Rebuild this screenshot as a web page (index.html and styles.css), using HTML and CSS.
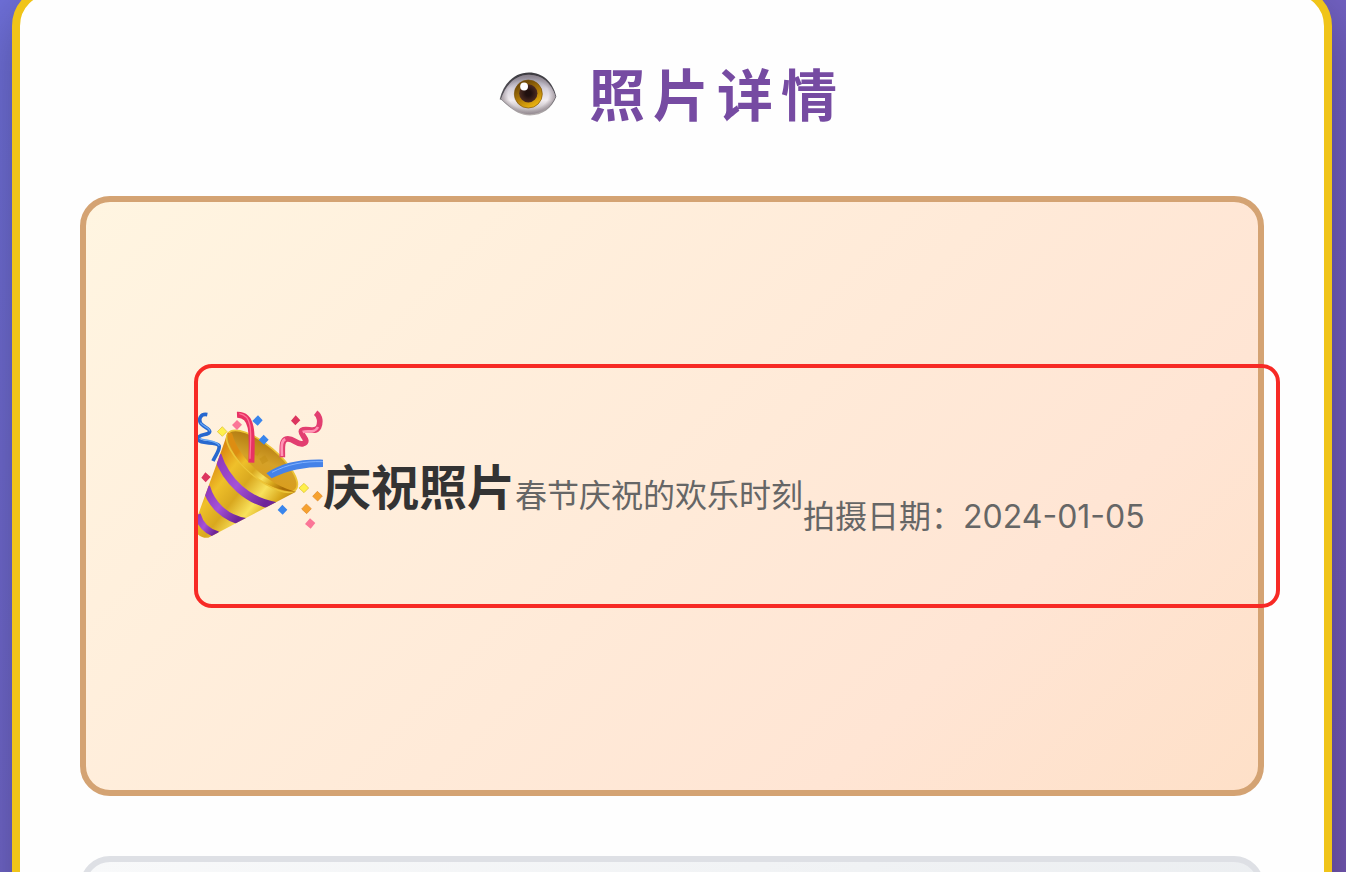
FILE: index.html
```
<!DOCTYPE html>
<html lang="zh-CN">
<head>
  <meta charset="UTF-8">
  <meta name="viewport" content="width=device-width, initial-scale=1.0">
  <title>照片详情</title>
  <link rel="stylesheet" href="styles.css">
</head>
<body>
  <main class="detail-card">
    <h1 class="detail-title">
      <svg class="eye-icon" viewBox="28 48 178 138" aria-hidden="true">
        <defs>
          <linearGradient id="lid" x1="0" y1="0" x2="0" y2="1">
            <stop offset="0" stop-color="#3c3b40"/>
            <stop offset="0.5" stop-color="#55525a"/>
            <stop offset="1" stop-color="#b9b3b3"/>
          </linearGradient>
          <linearGradient id="white" x1="0" y1="0" x2="0" y2="1">
            <stop offset="0" stop-color="#85818f"/>
            <stop offset="0.35" stop-color="#d5d0da"/>
            <stop offset="0.65" stop-color="#f1ecef"/>
            <stop offset="1" stop-color="#aaa4a8"/>
          </linearGradient>
          <linearGradient id="iris" x1="0.2" y1="0" x2="0.7" y2="1">
            <stop offset="0" stop-color="#5c3c06"/>
            <stop offset="0.5" stop-color="#a87408"/>
            <stop offset="1" stop-color="#f2bb10"/>
          </linearGradient>
          <radialGradient id="pupil">
            <stop offset="0.3" stop-color="#20100f"/>
            <stop offset="1" stop-color="#4d2c22"/>
          </radialGradient>
          <radialGradient id="corner" cx="0.5" cy="0.5" r="0.5">
            <stop offset="0.75" stop-color="#8c8088" stop-opacity="0"/>
            <stop offset="1" stop-color="#8c8088" stop-opacity=".7"/>
          </radialGradient>
        </defs>
        <path fill="url(#lid)" d="M30 133C42 84 76 51 120 51c42 0 74 29 84 74-14 37-43 58-81 58-35 0-62-24-86-47z"/>
        <path fill="url(#white)" d="M35 132C48 89 78 59 120 58c39 0 70 25 81 67-14 33-42 54-79 54-34 0-58-20-81-42z"/>
        <path fill="url(#corner)" d="M35 132C48 89 78 59 120 58c39 0 70 25 81 67-14 33-42 54-79 54-34 0-58-20-81-42z"/>
        <circle cx="118" cy="117" r="43" fill="url(#iris)" stroke="#7c5206" stroke-width="2"/>
        <circle cx="118" cy="115" r="28" fill="url(#pupil)"/>
        <circle cx="105" cy="94" r="12" fill="#fff"/>
      </svg>
      <span>照片详情</span>
    </h1>

    <section class="photo-frame">
      <div class="photo-content">
        <svg class="party-icon" viewBox="24 25 375 390" aria-hidden="true">
          <defs>
            <linearGradient id="gold" x1="0.1" y1="0.4" x2="0.8" y2="0.95">
              <stop offset="0" stop-color="#dd8d12"/>
              <stop offset="0.2" stop-color="#efc02a"/>
              <stop offset="0.42" stop-color="#d9a81f"/>
              <stop offset="0.62" stop-color="#f9e25c"/>
              <stop offset="0.8" stop-color="#d9a81c"/>
              <stop offset="1" stop-color="#a86c06"/>
            </linearGradient>
            <linearGradient id="inside" x1="0" y1="0" x2="1" y2="1">
              <stop offset="0" stop-color="#a46c09"/>
              <stop offset="0.5" stop-color="#d5a128"/>
              <stop offset="1" stop-color="#dc9b18"/>
            </linearGradient>
            <linearGradient id="band" x1="0" y1="0" x2="1" y2="0.6">
              <stop offset="0" stop-color="#8c36b8"/>
              <stop offset="0.5" stop-color="#a552d8"/>
              <stop offset="1" stop-color="#6f2598"/>
            </linearGradient>
            <clipPath id="cone">
              <path d="M112 98C85 180 50 270 10 382c8 20 28 32 45 29L318 273C260 260 150 190 112 98z"/>
            </clipPath>
          </defs>
          <path fill="url(#gold)" d="M112 98C85 180 50 270 10 382c8 20 28 32 45 29L318 273C260 260 150 190 112 98z"/>
          <g clip-path="url(#cone)" fill="none" stroke="url(#band)">
            <path stroke-width="24" d="M82 163C108 242 174 304 262 317"/>
            <path stroke-width="24" d="M48 258C63 310 103 353 166 364"/>
            <path stroke-width="20" d="M22 341C30 370 51 393 84 402"/>
          </g>
          <ellipse cx="216" cy="182" rx="132" ry="49" transform="rotate(40 216 182)" fill="url(#inside)" stroke="#edc536" stroke-width="5"/>
          <path fill="url(#gold)" d="M112 96C116 180 230 275 318 273 260 262 150 190 126 98z"/>
          <path fill="#c48f18" opacity=".6" d="M192 137l20 13-10 16-14-8zM208 174l17-10 10 16-18 11z"/>
          <path fill="none" stroke="#e83264" stroke-width="18" d="M141 42C190 40 187 99 184 186"/>
          <path fill="none" stroke="#ff7396" stroke-width="4" d="M148 39C193 46 181 108 180 174"/>
          <path fill="#4482e8" d="M229 218C272 188 328 175 399 177v22c-54 0-104 9-154 34z"/>
          <path fill="none" stroke="#7fb1ff" stroke-width="3" d="M246 215C292 191 341 181 399 183"/>
          <path fill="none" stroke="#2768cf" stroke-width="11" d="M52 42C32 38 26 54 31 66s30 17 28 27c-2 12-32 5-34 20-2 20 53 8 62 22 4 12-8 24-18 46"/>
          <path fill="none" stroke="#65a6f5" stroke-width="4" d="M31 66c9 13 29 15 28 26M28 113c22 8 53 6 60 22"/>
          <path fill="none" stroke="#e23e70" stroke-width="17" d="M277 170c0-31-3-51 13-55 20-4 31 19 49 14 25-8-15-31-3-40 14-10 40 11 50-10 5-12 6-32-9-43"/>
          <path fill="none" stroke="#ff94b4" stroke-width="8" d="M276 166c-1-29-3-45 10-50M338 94c14-6 35 6 46-15"/>
          <path fill="#3985ec" d="M204 44l14 15-15 16-16-14zM221 102l15 15-14 15-16-14zM277 312l15 15-14 15-15-14z"/>
          <path fill="#fb7697" d="M141 58l15 14-15 16-15-15zM360 353l16 14-14 17-17-14z"/>
          <path fill="#dc365e" d="M317 44l14 15-15 15-13-14zM46 215l16 14-15 16-13-14z"/>
          <path fill="#fff04c" stroke="#d9bd28" stroke-width="2" d="M97 78l14 15-14 14-15-14zM342 248l14 14-14 14-15-14z"/>
          <path fill="#f6a12e" stroke="#df8829" stroke-width="2" d="M382 272l15 14-14 15-15-14zM349 310l15 14-14 15-15-14z"/>
        </svg>
        <h2 class="photo-name">庆祝照片</h2>
        <p class="photo-desc">春节庆祝的欢乐时刻</p>
        <p class="photo-date">拍摄日期：2024-01-05</p>
      </div>
    </section>

    <section class="info-panel"></section>
  </main>
</body>
</html>
```
FILE: styles.css
```
* {
  box-sizing: border-box;
}

body {
  height: 100vh;
  margin: 0;
  padding: 0 14px 0 12px;
  overflow: hidden;
  background: linear-gradient(135deg, #6f70da 0%, #7458b4 100%);
  font-family: Inter, "Noto Sans CJK SC", sans-serif;
  color: #333;
}

.detail-card {
  min-height: 110vh;
  margin-top: -14px;
  padding: 60px 60px 60px;
  border: 8px solid #f0c419;
  border-radius: 40px;
  background: #fefefe;
  box-shadow: 0 20px 60px rgba(0, 0, 0, 0.3);
}

.detail-title {
  display: flex;
  justify-content: center;
  align-items: center;
  gap: 32px;
  height: 84px;
  margin: 0 0 58px;
  font-size: 56px;
  line-height: 84px;
  letter-spacing: 8px;
  color: #764ba2;
}

.eye-icon {
  width: 58px;
  height: 46px;
  margin-bottom: 4px;
}

.photo-frame {
  display: flex;
  align-items: center;
  height: 600px;
  padding-left: 108px;
  border: 6px solid #d4a373;
  border-radius: 30px;
  background: linear-gradient(135deg, #fff5e1 0%, #ffe5d4 75%, #fee0c8 100%);
}

/* runs past the right edge of the frame */
.photo-content {
  display: flex;
  flex: 1;
  align-items: center;
  height: 244px;
  margin-top: -20px;
  margin-right: -22px;
  border: 4px solid #f72a25;
  border-radius: 18px;
  white-space: nowrap;
}

.party-icon {
  flex: none;
  width: 125px;
  height: 130px;
  margin-bottom: 24px;
}

.photo-name {
  margin: 4px 0 0;
  font-size: 48px;
  line-height: 72px;
}

.photo-desc,
.photo-date {
  margin: 20px 0 0;
  font-size: 32px;
  line-height: 48px;
  color: #666;
}

.photo-date {
  margin-top: 62px;
}

.info-panel {
  height: 300px;
  margin-top: 60px;
  border: 6px solid #dee0e5;
  border-radius: 30px;
  background: linear-gradient(135deg, #f8f9fa 0%, #e9ecef 100%);
}
```
